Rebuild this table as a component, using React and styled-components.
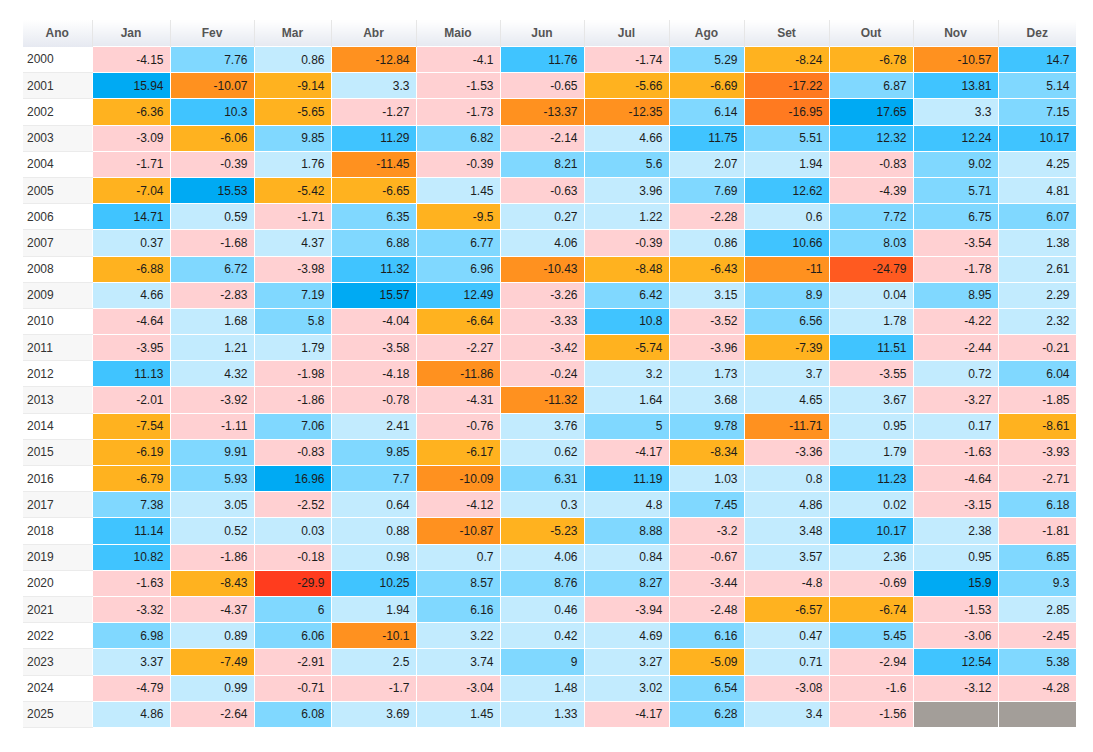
import React from "react";
import styled, { createGlobalStyle } from "styled-components";

const MONTHS = ["Jan", "Fev", "Mar", "Abr", "Maio", "Jun", "Jul", "Ago", "Set", "Out", "Nov", "Dez"];
const WIDTHS = [69, 78, 84, 77, 85, 84, 84, 85, 75, 85, 84, 85, 78];

const DATA = {
  2000: [-4.15, 7.76, 0.86, -12.84, -4.1, 11.76, -1.74, 5.29, -8.24, -6.78, -10.57, 14.7],
  2001: [15.94, -10.07, -9.14, 3.3, -1.53, -0.65, -5.66, -6.69, -17.22, 6.87, 13.81, 5.14],
  2002: [-6.36, 10.3, -5.65, -1.27, -1.73, -13.37, -12.35, 6.14, -16.95, 17.65, 3.3, 7.15],
  2003: [-3.09, -6.06, 9.85, 11.29, 6.82, -2.14, 4.66, 11.75, 5.51, 12.32, 12.24, 10.17],
  2004: [-1.71, -0.39, 1.76, -11.45, -0.39, 8.21, 5.6, 2.07, 1.94, -0.83, 9.02, 4.25],
  2005: [-7.04, 15.53, -5.42, -6.65, 1.45, -0.63, 3.96, 7.69, 12.62, -4.39, 5.71, 4.81],
  2006: [14.71, 0.59, -1.71, 6.35, -9.5, 0.27, 1.22, -2.28, 0.6, 7.72, 6.75, 6.07],
  2007: [0.37, -1.68, 4.37, 6.88, 6.77, 4.06, -0.39, 0.86, 10.66, 8.03, -3.54, 1.38],
  2008: [-6.88, 6.72, -3.98, 11.32, 6.96, -10.43, -8.48, -6.43, -11, -24.79, -1.78, 2.61],
  2009: [4.66, -2.83, 7.19, 15.57, 12.49, -3.26, 6.42, 3.15, 8.9, 0.04, 8.95, 2.29],
  2010: [-4.64, 1.68, 5.8, -4.04, -6.64, -3.33, 10.8, -3.52, 6.56, 1.78, -4.22, 2.32],
  2011: [-3.95, 1.21, 1.79, -3.58, -2.27, -3.42, -5.74, -3.96, -7.39, 11.51, -2.44, -0.21],
  2012: [11.13, 4.32, -1.98, -4.18, -11.86, -0.24, 3.2, 1.73, 3.7, -3.55, 0.72, 6.04],
  2013: [-2.01, -3.92, -1.86, -0.78, -4.31, -11.32, 1.64, 3.68, 4.65, 3.67, -3.27, -1.85],
  2014: [-7.54, -1.11, 7.06, 2.41, -0.76, 3.76, 5, 9.78, -11.71, 0.95, 0.17, -8.61],
  2015: [-6.19, 9.91, -0.83, 9.85, -6.17, 0.62, -4.17, -8.34, -3.36, 1.79, -1.63, -3.93],
  2016: [-6.79, 5.93, 16.96, 7.7, -10.09, 6.31, 11.19, 1.03, 0.8, 11.23, -4.64, -2.71],
  2017: [7.38, 3.05, -2.52, 0.64, -4.12, 0.3, 4.8, 7.45, 4.86, 0.02, -3.15, 6.18],
  2018: [11.14, 0.52, 0.03, 0.88, -10.87, -5.23, 8.88, -3.2, 3.48, 10.17, 2.38, -1.81],
  2019: [10.82, -1.86, -0.18, 0.98, 0.7, 4.06, 0.84, -0.67, 3.57, 2.36, 0.95, 6.85],
  2020: [-1.63, -8.43, -29.9, 10.25, 8.57, 8.76, 8.27, -3.44, -4.8, -0.69, 15.9, 9.3],
  2021: [-3.32, -4.37, 6, 1.94, 6.16, 0.46, -3.94, -2.48, -6.57, -6.74, -1.53, 2.85],
  2022: [6.98, 0.89, 6.06, -10.1, 3.22, 0.42, 4.69, 6.16, 0.47, 5.45, -3.06, -2.45],
  2023: [3.37, -7.49, -2.91, 2.5, 3.74, 9, 3.27, -5.09, 0.71, -2.94, 12.54, 5.38],
  2024: [-4.79, 0.99, -0.71, -1.7, -3.04, 1.48, 3.02, 6.54, -3.08, -1.6, -3.12, -4.28],
  2025: [4.86, -2.64, 6.08, 3.69, 1.45, 1.33, -4.17, 6.28, 3.4, -1.56, null, null],
};

// colour scale of the monthly returns
const colorFor = (v) => {
  if (v === null) return "#a39e99";
  if (v >= 15) return "#00aaf3";
  if (v >= 10) return "#40c4ff";
  if (v >= 5) return "#80d8ff";
  if (v >= 0) return "#c2ebfe";
  if (v > -5) return "#ffd0d2";
  if (v > -10) return "#ffb21f";
  if (v > -15) return "#ff911f";
  if (v > -20) return "#ff7a20";
  if (v > -25) return "#ff5a20";
  return "#ff3c1e";
};

const GlobalStyle = createGlobalStyle`
  body {
    margin: 0;
    background: #ffffff;
    font-family: "Liberation Sans", Arial, sans-serif;
  }
`;

const Page = styled.div`
  padding: 20px 0 0 23px;
`;

const Table = styled.table`
  border-collapse: collapse;
  table-layout: fixed;
  width: 1053px;
  font-size: 12px;
`;

const HeadCell = styled.th`
  height: 26px;
  padding: 0;
  font-weight: bold;
  color: #555555;
  text-align: center;
  background: linear-gradient(to bottom, #ffffff 0%, #f1f3f7 55%, #e6e9f1 100%);
  border-right: 1px solid #e6e6e6;
  &:last-child {
    border-right: none;
  }
`;

const Row = styled.tr`
  height: 26.2px;
`;

const YearCell = styled.td`
  padding: 0 0 0 4px;
  color: #333333;
  background: ${(p) => (p.$odd ? "#f7f7f7" : "#ffffff")};
  border-bottom: 1px solid #ebebeb;
`;

const ValueCell = styled.td`
  padding: 0 6px 0 0;
  text-align: right;
  color: #1c1c1c;
  background: ${(p) => p.$bg};
  border: 1px solid #ffffff;
`;

export default function App() {
  const years = Object.keys(DATA);
  return (
    <Page>
      <GlobalStyle />
      <Table>
        <colgroup>
          {WIDTHS.map((w, i) => (
            <col key={i} style={{ width: w }} />
          ))}
        </colgroup>
        <thead>
          <tr>
            <HeadCell>Ano</HeadCell>
            {MONTHS.map((m) => (
              <HeadCell key={m}>{m}</HeadCell>
            ))}
          </tr>
        </thead>
        <tbody>
          {years.map((y, i) => (
            <Row key={y}>
              <YearCell $odd={i % 2 === 1}>{y}</YearCell>
              {DATA[y].map((v, j) => (
                <ValueCell key={j} $bg={colorFor(v)}>
                  {v === null ? "" : v}
                </ValueCell>
              ))}
            </Row>
          ))}
        </tbody>
      </Table>
    </Page>
  );
}
